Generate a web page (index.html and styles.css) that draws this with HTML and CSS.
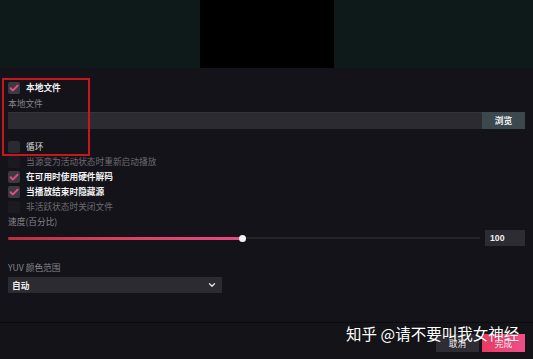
FILE: index.html
```html
<!DOCTYPE html>
<html lang="zh">
<head>
<meta charset="utf-8">
<link rel="stylesheet" href="styles.css">
</head>
<body>
<div class="page">
  <div class="preview"><div class="screen"></div></div>
  <div class="panel">
    <div class="check-row main first">
      <span class="box on"><svg viewBox="0 0 12 12"><path d="M2.6 6.2 L5 8.4 L9.6 3.6" /></svg></span>
      <span class="txt strong">本地文件</span>
    </div>
    <div class="label">本地文件</div>
    <div class="file-row">
      <div class="field"></div>
      <div class="browse">浏览</div>
    </div>
    <div class="check-list">
      <div class="check-row"><span class="box"></span><span class="txt">循环</span></div>
      <div class="check-row dis"><span class="box faint"></span><span class="txt">当源变为活动状态时重新启动播放</span></div>
      <div class="check-row"><span class="box on"><svg viewBox="0 0 12 12"><path d="M2.6 6.2 L5 8.4 L9.6 3.6" /></svg></span><span class="txt strong">在可用时使用硬件解码</span></div>
      <div class="check-row"><span class="box on"><svg viewBox="0 0 12 12"><path d="M2.6 6.2 L5 8.4 L9.6 3.6" /></svg></span><span class="txt strong">当播放结束时隐藏源</span></div>
      <div class="check-row dis"><span class="box faint"></span><span class="txt">非活跃状态时关闭文件</span></div>
    </div>
    <div class="label speed">速度(百分比)</div>
    <div class="slider-row">
      <div class="slider">
        <div class="track"></div>
        <div class="fill" style="width: 234px"></div>
        <div class="knob" style="left: 231px"></div>
      </div>
      <div class="num">100</div>
    </div>
    <div class="label yuv">YUV 颜色范围</div>
    <div class="select"><span>自动</span><svg viewBox="0 0 8 6"><path d="M1.5 1.8 L4 4.2 L6.5 1.8" /></svg></div>
  </div>
  <div class="footer">
    <div class="btn cancel">取消</div>
    <div class="btn ok">完成</div>
  </div>
  <div class="annot"></div>
  <div class="watermark">知乎 @请不要叫我女神经</div>
</div>
</body>
</html>
```

FILE: styles.css
```css
* { box-sizing: border-box; }
html, body { margin: 0; padding: 0; background: #141319; }
body {
  font-family: "Noto Sans CJK SC", "Noto Sans", sans-serif;
  width: 533px;
  height: 359px;
  overflow: hidden;
}
.page {
  position: relative;
  width: 533px;
  height: 359px;
  display: flex;
  flex-direction: column;
  background: #141319;
}
.preview {
  height: 68px;
  background: #0e1a1a;
  display: flex;
  justify-content: center;
}
.screen {
  width: 134px;
  height: 68px;
  background: #000;
}
.panel {
  display: flex;
  flex-direction: column;
  padding: 0 8px;
}
.check-row {
  display: flex;
  align-items: center;
  height: 15px;
  gap: 6px;
}
.check-row.first { margin-top: 13px; height: 14px; }
.box {
  width: 12px;
  height: 12px;
  border-radius: 2px;
  background: #2a2a31;
  display: flex;
  align-items: center;
  justify-content: center;
  flex: none;
}
.box.on { background: #3b3a42; }
.box.faint { background: #1b1a20; }
.box svg { width: 12px; height: 12px; }
.box svg path {
  fill: none;
  stroke: #e54a82;
  stroke-width: 2;
  stroke-linecap: round;
  stroke-linejoin: round;
}
.txt {
  font-size: 8.7px;
  line-height: 12px;
  color: #d6d6da;
  white-space: nowrap;
}
.txt.strong { color: #f2f2f4; font-weight: 700; }
.dis .txt { color: #6c6b72; }
.label {
  font-size: 8.7px;
  line-height: 12px;
  color: #85848b;
  margin-top: 3px;
}
.file-row {
  display: flex;
  margin-top: 2px;
  height: 17px;
}
.field {
  flex: 1;
  background: #2c2b31;
  border-top: 1px solid #34333a;
}
.browse {
  width: 43px;
  background: #3b484e;
  color: #f0f0f0;
  font-size: 8.7px;
  font-weight: 700;
  display: flex;
  align-items: center;
  justify-content: center;
}
.check-list {
  display: flex;
  flex-direction: column;
  margin-top: 10px;
}
.label.speed { margin-top: 2px; }
.slider-row {
  display: flex;
  align-items: center;
  height: 16px;
  margin-top: 2px;
  gap: 5px;
}
.slider {
  position: relative;
  flex: 1;
  height: 10px;
}
.track {
  position: absolute;
  left: 0; right: 0;
  top: 4px;
  height: 2px;
  background: #25242a;
}
.fill {
  position: absolute;
  left: 0;
  top: 3.5px;
  height: 3px;
  border-radius: 2px;
  background: linear-gradient(90deg, #b8303e, #e0405f 50%, #e84a84);
}
.knob {
  position: absolute;
  top: 1.5px;
  width: 7px;
  height: 7px;
  border-radius: 50%;
  background: #f4f4f4;
}
.num {
  width: 40px;
  height: 16px;
  background: #2d2c32;
  color: #f2f2f2;
  font-family: "Liberation Sans", sans-serif;
  font-size: 8.7px;
  font-weight: 700;
  line-height: 16px;
  padding-left: 5px;
}
.label.yuv { margin-top: 16px; font-family: "Noto Sans CJK SC", sans-serif; }
.select {
  margin-top: 3px;
  width: 214px;
  height: 16px;
  background: #2c2b31;
  display: flex;
  align-items: center;
  justify-content: space-between;
  padding: 0 6px 0 4px;
  color: #efefef;
  font-size: 8.7px;
  font-weight: 700;
}
.select svg { width: 8px; height: 6px; }
.select svg path {
  fill: none;
  stroke: #e6e6e6;
  stroke-width: 1.3;
  stroke-linecap: round;
  stroke-linejoin: round;
}
.footer {
  margin-top: 29px;
  border-top: 1px solid #0b0b0e;
  flex: 1;
  background: #141318;
  display: flex;
  justify-content: flex-end;
  align-items: flex-start;
  padding: 11px 8px 0 0;
  gap: 3px;
}
.btn {
  width: 43px;
  height: 18px;
  font-size: 8.7px;
  color: #f0f0f0;
  display: flex;
  align-items: center;
  justify-content: center;
}
.btn.cancel { background: #2e2d33; }
.btn.ok { background: linear-gradient(90deg, #e83a64, #ee4f8a); }
.annot {
  position: absolute;
  left: 2px;
  top: 78px;
  width: 88px;
  height: 78px;
  border: 2px solid #c8161f;
}
.watermark {
  position: absolute;
  left: 346px;
  top: 322px;
  font-size: 15.5px;
  line-height: 22px;
  color: #ffffff;
  white-space: nowrap;
  text-shadow: 0 0 1px rgba(0,0,0,0.4);
}
```
